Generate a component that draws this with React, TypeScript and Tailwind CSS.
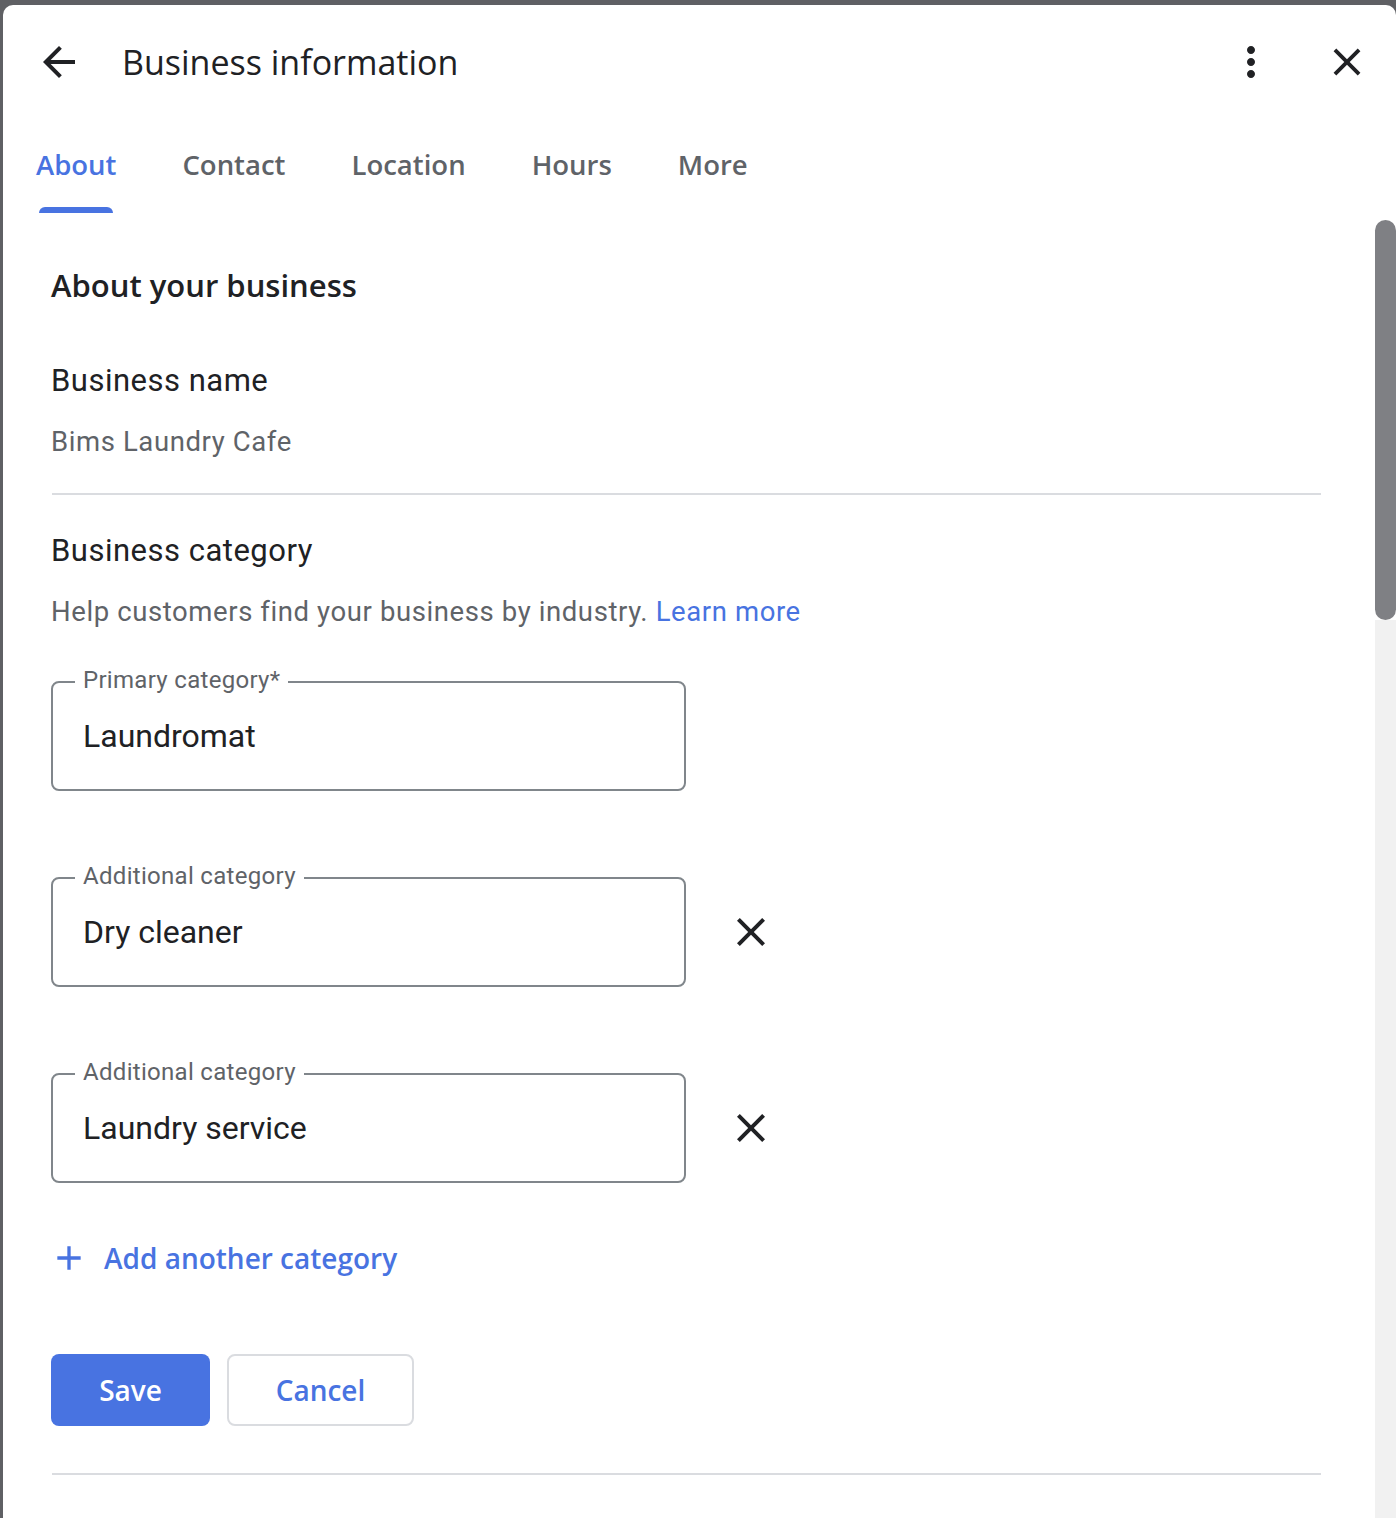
import React from "react";

const heading = { fontFamily: '"Open Sans", "Liberation Sans", sans-serif' };
const body = { fontFamily: 'Roboto, "Liberation Sans", sans-serif' };

function CloseIcon({ size, className }: { size: number; className?: string }) {
  return (
    <svg width={size} height={size} viewBox="0 0 24 24" className={className}>
      <path
        fill="#202124"
        d="M19 6.41L17.59 5 12 10.59 6.41 5 5 6.41 10.59 12 5 17.59 6.41 19 12 13.41 17.59 19 19 17.59 13.41 12z"
      />
    </svg>
  );
}

function Field({ label, value, removable }: { label: string; value: string; removable?: boolean }) {
  return (
    <div className="flex items-center">
      <div className="relative flex h-[110px] w-[635px] items-center rounded-[8px] border-2 border-[#80868b] pl-[30px]">
        <span
          style={body}
          className="absolute left-[22px] top-[-15px] bg-white px-[8px] text-[24px] leading-[24px] tracking-[0.3px] text-[#5f6368]"
        >
          {label}
        </span>
        <span style={body} className="text-[32px] leading-[40px] text-[#202124]">
          {value}
        </span>
      </div>
      {removable && <CloseIcon size={48} className="ml-[41px]" />}
    </div>
  );
}

export default function App() {
  const tabs = ["About", "Contact", "Location", "Hours", "More"];
  return (
    <div className="h-[1518px] w-[1396px] overflow-hidden bg-[#5f6064] pl-[3px] pt-[5px]">
      <div className="flex h-full flex-col rounded-t-[10px] bg-white">
        {/* Title row */}
        <div className="flex h-[114px] shrink-0 items-center pl-[32px] pr-[26px]">
          <svg width="48" height="48" viewBox="0 0 24 24">
            <path fill="#202124" d="M20 11H7.83l5.59-5.59L12 4l-8 8 8 8 1.41-1.41L7.83 13H20v-2z" />
          </svg>
          <h1 style={heading} className="ml-[39px] text-[34px] leading-[40px] text-[#202124]">
            Business information
          </h1>
          <div className="flex-1" />
          <svg width="48" height="48" viewBox="0 0 24 24">
            <path
              fill="#202124"
              d="M12 8c1.1 0 2-.9 2-2s-.9-2-2-2-2 .9-2 2 .9 2 2 2zm0 2c-1.1 0-2 .9-2 2s.9 2 2 2 2-.9 2-2-.9-2-2-2zm0 6c-1.1 0-2 .9-2 2s.9 2 2 2 2-.9 2-2-.9-2-2-2z"
            />
          </svg>
          <CloseIcon size={46} className="ml-[49px]" />
        </div>
        {/* Tabs */}
        <div className="flex h-[94px] shrink-0">
          {tabs.map((t, i) => (
            <div key={t} className="flex h-full flex-col px-[33px]">
              <div
                style={heading}
                className={
                  i === 0
                    ? "flex flex-1 items-center pt-[4px] text-[27.5px] font-[550] text-[#4873e1]"
                    : "flex flex-1 items-center pt-[4px] text-[27.5px] font-[550] text-[#5f6368]"
                }
              >
                {t}
              </div>
              <div
                className={
                  i === 0 ? "mx-[3px] h-[6px] rounded-t-[6px] bg-[#4873e1]" : "mx-[3px] h-[6px]"
                }
              />
            </div>
          ))}
        </div>
        {/* Scroll area */}
        <div className="flex min-h-0 flex-1">
          <div className="flex-1 pl-[48px] pr-[54px]">
            <h2 style={heading} className="mt-[52px] text-[31px] font-[550] leading-[40px] text-[#202124]">
              About your business
            </h2>
            <div style={body} className="mt-[56px] text-[31px] leading-[40px] tracking-[0.5px] text-[#202124]">
              Business name
            </div>
            <div style={body} className="mt-[23px] text-[27.5px] leading-[36px] tracking-[0.6px] text-[#5f6368]">
              Bims Laundry Cafe
            </div>
            <div className="ml-[1px] mt-[33px] h-[2px] bg-[#dadce0]" />
            <div style={body} className="mt-[36px] text-[31px] leading-[40px] tracking-[0.5px] text-[#202124]">
              Business category
            </div>
            <div style={body} className="mt-[23px] text-[27.5px] leading-[36px] tracking-[0.6px] text-[#5f6368]">
              Help customers find your business by industry.{" "}
              <span className="text-[#4873e1]">Learn more</span>
            </div>
            <div className="mt-[51px] flex flex-col gap-[86px]">
              <Field label="Primary category*" value="Laundromat" />
              <Field label="Additional category" value="Dry cleaner" removable />
              <Field label="Additional category" value="Laundry service" removable />
            </div>
            <div className="mt-[55px] flex h-[40px] items-center">
              <svg width="40" height="40" viewBox="0 0 24 24" className="-ml-[2px]">
                <path fill="#4873e1" d="M19 13h-6v6h-2v-6H5v-2h6V5h2v6h6v2z" />
              </svg>
              <span style={heading} className="ml-[15px] text-[28px] font-[550] text-[#4873e1]">
                Add another category
              </span>
            </div>
            <div className="mt-[76px] flex gap-[17px]">
              <button
                style={heading}
                className="flex h-[72px] w-[159px] items-center justify-center rounded-[8px] bg-[#4873e1] text-[28px] font-[550] text-white"
              >
                Save
              </button>
              <button
                style={heading}
                className="flex h-[72px] w-[187px] items-center justify-center rounded-[8px] border-2 border-[#dadce0] bg-white text-[28px] font-[550] text-[#4873e1]"
              >
                Cancel
              </button>
            </div>
            <div className="ml-[1px] mt-[47px] h-[2px] bg-[#dadce0]" />
          </div>
          <div className="flex w-[21px] shrink-0 flex-col">
            <div className="mt-[7px] h-[400px] rounded-full bg-[#7f8084]" />
            <div className="flex-1 bg-[#f1f1f1]" />
          </div>
        </div>
      </div>
    </div>
  );
}
